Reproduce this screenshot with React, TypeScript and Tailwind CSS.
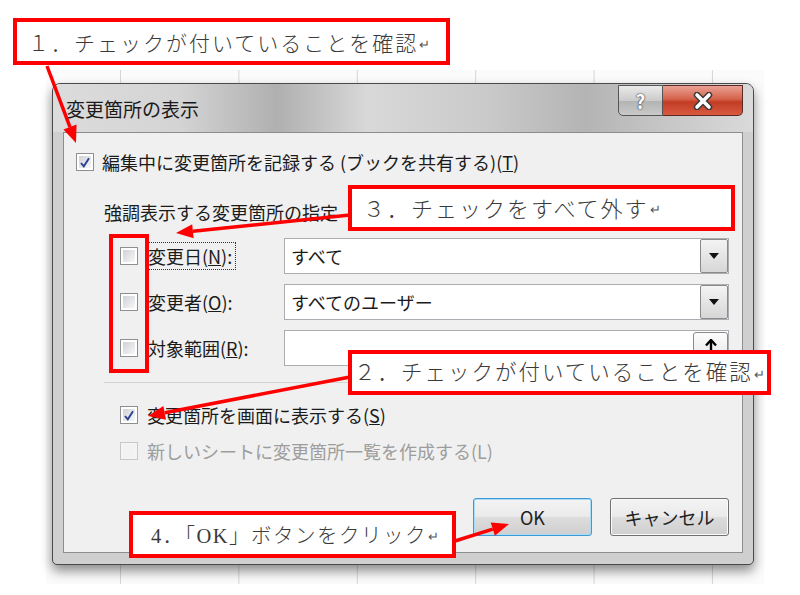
import clsx from "clsx";

const uiFont = "font-['Noto_Sans_CJK_JP','Noto_Sans',sans-serif]";
const noteFont = "font-['Liberation_Serif','Noto_Sans_CJK_JP',serif]";

function Checkbox({ checked, disabled }: { checked?: boolean; disabled?: boolean }) {
  return (
    <span
      className={clsx(
        "flex h-[18px] w-[18px] shrink-0 items-center justify-center border p-[2px]",
        disabled ? "border-[#c8c8c8] bg-[#f4f4f4]" : "border-[#8e8f8f] bg-white"
      )}
    >
      <span
        className={clsx(
          "flex h-full w-full items-center justify-center",
          disabled ? "bg-[#f2f2f2]" : "bg-[linear-gradient(135deg,#cfd2d6,#f7f7f7)]"
        )}
      >
        {checked && (
          <svg viewBox="0 0 12 12" className="h-[13px] w-[13px]">
            <path d="M2 6.5 L4.8 9.8 L10 1.8" fill="none" stroke="#2b3f93" strokeWidth="1.9" />
          </svg>
        )}
      </span>
    </span>
  );
}

function Combo({ value }: { value: string }) {
  return (
    <div className="flex h-full w-[445px] border border-[#abadb3] bg-white">
      <div className="flex flex-1 items-center pl-[6px] leading-none">{value}</div>
      <div className="flex w-[28px] items-center justify-center rounded-[2px] border border-[#8a8a8a] bg-[linear-gradient(#f4f4f4,#d6d6d6)]">
        <svg width="10" height="6" viewBox="0 0 10 6">
          <path d="M0 0H10L5 6Z" fill="#111" />
        </svg>
      </div>
    </div>
  );
}

type Row = { label: string; key: string; value?: string; focus?: boolean };

const rows: Row[] = [
  { label: "変更日", key: "N", value: "すべて", focus: true },
  { label: "変更者", key: "O", value: "すべてのユーザー" },
  { label: "対象範囲", key: "R" },
];

function RangeField() {
  return (
    <div className="flex h-full w-[445px] items-start justify-end border border-[#abadb3] bg-white">
      <div className="mt-[1px] flex h-[32px] w-[35px] justify-center rounded-[3px] border border-[#8a8a8a] bg-[linear-gradient(#fdfdfd,#e4e4e4)] pt-[6px]">
        <svg width="12" height="14" viewBox="0 0 12 14">
          <path d="M6 1V14" stroke="#000" strokeWidth="2.4" />
          <path d="M1 6.5L6 1L11 6.5" fill="none" stroke="#000" strokeWidth="2.4" />
        </svg>
      </div>
    </div>
  );
}

function DialogButton({ label, primary }: { label: string; primary?: boolean }) {
  return (
    <div
      className={clsx(
        "flex h-[38px] w-[119px] items-center justify-center rounded-[3px] border bg-[linear-gradient(#f3f3f3_0%,#ebebeb_48%,#dcdcdc_52%,#cfcfcf_100%)] text-[18px] leading-none text-[#222]",
        primary ? "border-[#3c9ad6] shadow-[inset_0_0_0_1px_#a9dcf7]" : "border-[#707070] shadow-[inset_0_0_0_1px_#fbfbfb]"
      )}
    >
      {label}
    </div>
  );
}

function Window() {
  return (
    <div className={clsx("flex h-[482px] w-[702px] flex-col rounded-t-[8px] rounded-b-[5px] border border-[#4a4a4a] bg-[#cfcfcf] shadow-[0_6px_12px_rgba(0,0,0,0.45)]", uiFont)}>
      {/* title bar */}
      <div className="flex h-[48px] items-start justify-between rounded-t-[7px] bg-[linear-gradient(90deg,#dcdcdc_0%,#d4d4d4_18%,#b0b0b0_32%,#d8d8d8_45%,#cacaca_62%,#b4b4b4_76%,#dadada_100%)]">
        <div className="self-center pl-[13px] text-[19px] leading-none text-[#1a1a1a]">変更箇所の表示</div>
        <div className="mr-[10px] mt-[1px] flex h-[31px]">
          <div className="flex w-[45px] items-center justify-center rounded-bl-[5px] border border-[#555] bg-[linear-gradient(#eaeaea_0%,#cbcbcb_50%,#b3b3b3_52%,#c9c9c9_100%)] text-[19px] font-bold leading-none text-white [text-shadow:0_0_2px_#333,0_0_1px_#333]">
            ?
          </div>
          <div className="flex w-[80px] items-center justify-center rounded-br-[5px] border border-l-0 border-[#5b2a22] bg-[linear-gradient(#e9a193_0%,#d6624b_45%,#c23c25_55%,#d95a40_100%)]">
            <svg width="22" height="18" viewBox="0 0 22 18">
              <path d="M5 3L17 15M17 3L5 15" stroke="#3a3a3a" strokeWidth="6.5" strokeLinecap="round" />
              <path d="M5 3L17 15M17 3L5 15" stroke="#fff" strokeWidth="3.6" strokeLinecap="round" />
            </svg>
          </div>
        </div>
      </div>

      {/* client area */}
      <div className="mx-[10px] mb-[11px] flex-1 border border-[#8d8d8d] bg-[#f0f0f0] pl-[12px] pr-[11px] pt-[19px] text-[18px] text-[#1b1b1b]">
        <div className="flex h-[20px] items-center gap-[8px] leading-none">
          <Checkbox checked />
          <span>
            編集中に変更箇所を記録する (ブックを共有する)(<u>T</u>)
          </span>
        </div>

        <div className="ml-[28px] mt-[28px] flex h-[24px] items-center leading-none">強調表示する変更箇所の指定</div>

        <div className="ml-[44px] mt-[14px] flex flex-col gap-[10px]">
          {rows.map((row) => (
            <div key={row.key} className="flex h-[36px] items-center">
              <Checkbox />
              <div className="ml-[9px] w-[137px] shrink-0">
                <span
                  className={clsx(
                    "inline-flex h-[28px] items-center border pr-[3px] leading-none",
                    row.focus ? "border-dotted border-[#333]" : "border-transparent"
                  )}
                >
                  {row.label}(<u>{row.key}</u>):
                </span>
              </div>
              {row.value !== undefined ? <Combo value={row.value} /> : <RangeField />}
            </div>
          ))}
        </div>

        <div className="ml-[28px] mt-[16px] h-px bg-[#d3d3d3]" />

        <div className="ml-[44px] mt-[22px] flex h-[20px] items-center gap-[9px] leading-none">
          <Checkbox checked />
          <span>
            変更箇所を画面に表示する(<u>S</u>)
          </span>
        </div>
        <div className="ml-[44px] mt-[16px] flex h-[20px] items-center gap-[9px] leading-none text-[#9d9d9d]">
          <Checkbox disabled />
          <span>新しいシートに変更箇所一覧を作成する(L)</span>
        </div>

        <div className="mr-[2px] mt-[37px] flex justify-end gap-[18px]">
          <DialogButton label="OK" primary />
          <DialogButton label="キャンセル" />
        </div>
      </div>
    </div>
  );
}

type Arrow = { x1: number; y1: number; x2: number; y2: number };

const arrows: Arrow[] = [
  { x1: 47, y1: 66, x2: 76, y2: 143 },
  { x1: 350, y1: 215, x2: 176, y2: 233 },
  { x1: 350, y1: 377, x2: 148, y2: 416 },
  { x1: 455, y1: 541, x2: 509, y2: 524 },
];

function ArrowShape({ x1, y1, x2, y2 }: Arrow) {
  const a = Math.atan2(y2 - y1, x2 - x1);
  const len = 17;
  const half = 7;
  const bx = x2 - len * Math.cos(a);
  const by = y2 - len * Math.sin(a);
  const px = -Math.sin(a) * half;
  const py = Math.cos(a) * half;
  return (
    <g>
      <line x1={x1} y1={y1} x2={bx} y2={by} stroke="#f00" strokeWidth="3.5" />
      <polygon points={`${x2},${y2} ${bx + px},${by + py} ${bx - px},${by - py}`} fill="#f00" />
    </g>
  );
}

type Note = { text: string; box: string; size: string };

const notes: Note[] = [
  { text: "１．チェックが付いていることを確認", box: "left-[13px] top-[18px] w-[437px] h-[47px] pl-[11px] pt-[6px]", size: "text-[21px] tracking-[2px]" },
  { text: "３．チェックをすべて外す", box: "left-[348px] top-[185px] w-[387px] h-[46px] pl-[11px] pt-[3px]", size: "text-[22px] tracking-[2px]" },
  { text: "２．チェックが付いていることを確認", box: "left-[348px] top-[350px] w-[423px] h-[45px] pl-[2px] pt-[3px]", size: "text-[21.5px] tracking-[2px]" },
  { text: "4．「OK」ボタンをクリック", box: "left-[129px] top-[511px] w-[327px] h-[47px] pl-[18px] pt-[3px]", size: "text-[20.5px] tracking-[1.5px]" },
];

export default function App() {
  return (
    <div className="relative h-[595px] w-[800px] overflow-hidden bg-white">
      {/* worksheet behind the dialog */}
      <div className="ml-[46px] mt-[70px] h-[514px] w-[718px] bg-[#fbfbfb] bg-[linear-gradient(90deg,#d6d6d6_1px,transparent_1px)] pl-[6px] pt-[13px] [background-position:74px_0] [background-size:118.4px_100%]">
        <Window />
      </div>

      {/* red box around the three checkboxes */}
      <div className="absolute left-[109px] top-[234px] h-[139px] w-[40px] border-[4px] border-[#f00]" />

      <svg className="pointer-events-none absolute left-0 top-0" width="800" height="595">
        {arrows.map((a, i) => (
          <ArrowShape key={i} {...a} />
        ))}
      </svg>

      {notes.map((n) => (
        <div
          key={n.text}
          className={clsx(
            "absolute flex items-center whitespace-nowrap border-[4px] border-[#f00] bg-white font-light leading-none text-[#3a3a3a]",
            noteFont,
            n.box,
            n.size
          )}
        >
          {n.text}
          <span className="ml-[1px] text-[13px] tracking-normal text-[#555]">↵</span>
        </div>
      ))}
    </div>
  );
}
